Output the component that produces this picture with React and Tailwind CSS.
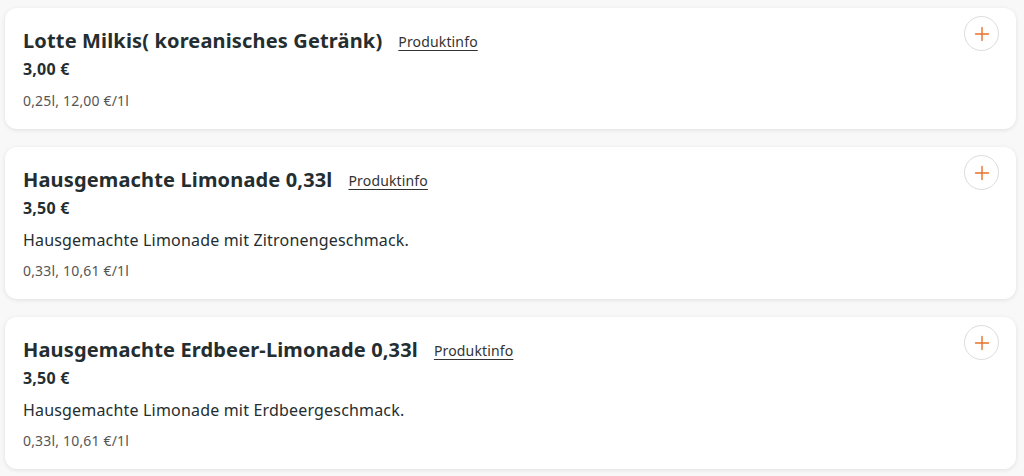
import React from "react";

const items = [
  { title: "Lotte Milkis( koreanisches Getränk)", price: "3,00 €", desc: null, unit: "0,25l, 12,00 €/1l" },
  { title: "Hausgemachte Limonade 0,33l", price: "3,50 €", desc: "Hausgemachte Limonade mit Zitronengeschmack.", unit: "0,33l, 10,61 €/1l" },
  { title: "Hausgemachte Erdbeer-Limonade 0,33l", price: "3,50 €", desc: "Hausgemachte Limonade mit Erdbeergeschmack.", unit: "0,33l, 10,61 €/1l" },
];

function Plus() {
  return (
    <button className="absolute right-[17px] top-[8px] w-[35px] h-[35px] rounded-full border border-[#dcdcdc] bg-white flex items-center justify-center">
      <svg width="16" height="16" viewBox="0 0 16 16" fill="none">
        <path d="M8 1.5v13M1.5 8h13" stroke="#e8702a" strokeWidth="1.4" strokeLinecap="round" />
      </svg>
    </button>
  );
}

export default function App() {
  return (
    <div className="w-[1024px] h-[476px] bg-[#f8f8f8] px-[5px] pt-[8px] flex flex-col gap-[18px] overflow-hidden" style={{ fontFamily: '"Noto Sans", "Open Sans", sans-serif' }}>
      {items.map((it, i) => (
        <div key={i} className="relative w-[1011px] bg-white rounded-[12px] shadow-[0_1px_4px_rgba(0,0,0,0.1)] pl-[18px] pt-[19px] pb-[18px] text-[#242e30]">
          <Plus />
          <div className="flex items-center h-[28px]">
            <span className="text-[20px] font-bold leading-[28px] tracking-[0.15px]">{it.title}</span>
            <span className="ml-[16px] text-[14px] underline underline-offset-[3px] text-[#333] leading-[20px] mt-[1px] tracking-[0.15px]">Produktinfo</span>
          </div>
          <div className="text-[16px] font-bold leading-[28px] tracking-[0.2px]">{it.price}</div>
          {it.desc && <div className="mt-[6px] text-[16px] leading-[24px] tracking-[0.18px]">{it.desc}</div>}
          <div className={(it.desc ? "mt-[9px]" : "mt-[8px]") + " text-[14px] leading-[20px] text-[#555] tracking-[0.18px]"}>{it.unit}</div>
        </div>
      ))}
    </div>
  );
}
